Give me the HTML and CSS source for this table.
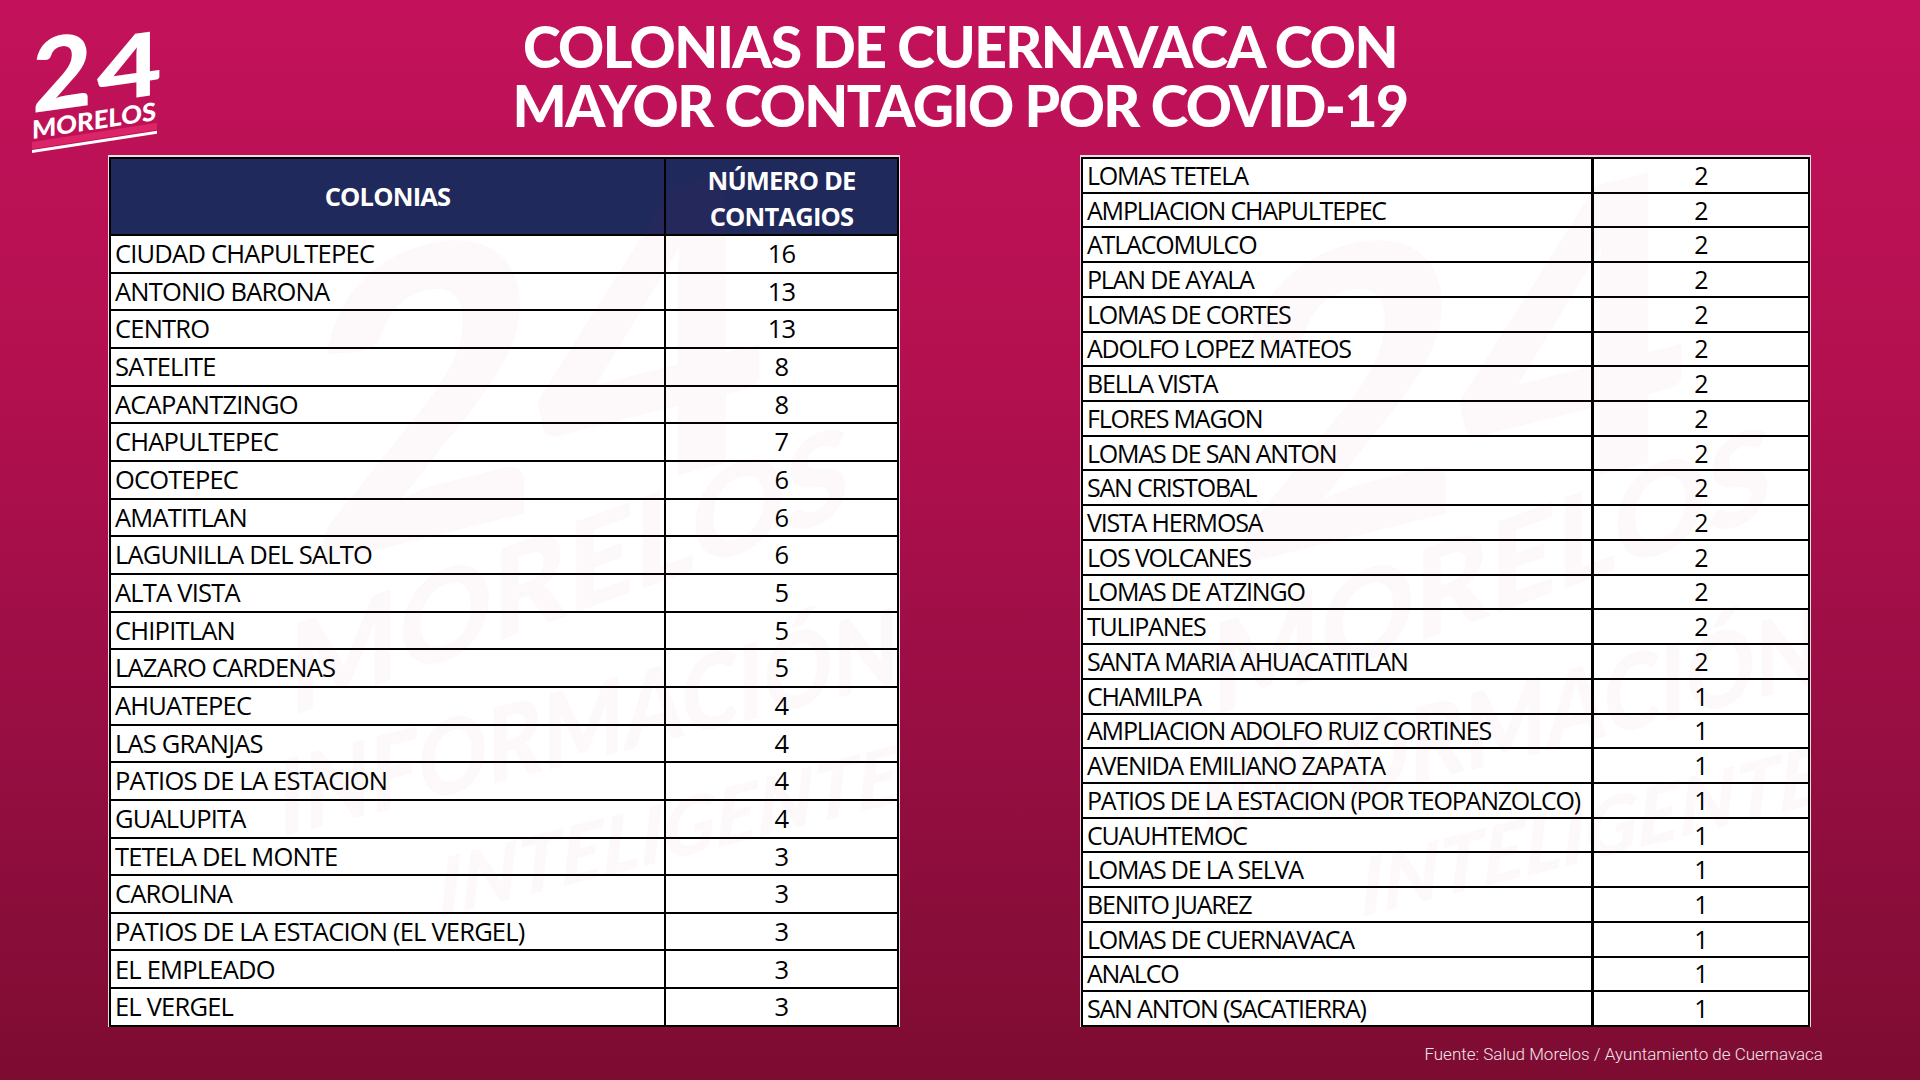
FILE: index.html
```html
<!DOCTYPE html>
<html lang="es">
<head>
<meta charset="utf-8">
<title>Colonias de Cuernavaca con mayor contagio por COVID-19</title>
<link rel="stylesheet" href="styles.css">
</head>
<body>
<div class="page">
  <header class="top">
    <div class="logo-cell">
      <svg class="logo" width="140" height="130" viewBox="0 0 140 130" aria-label="24 Morelos">
        <g transform="translate(3,84) skewY(-8)">
          <text class="logo-num" x="0" y="0" textLength="60" lengthAdjust="spacingAndGlyphs">2</text>
        </g>
        <g transform="translate(68,74) skewY(-8)">
          <text class="logo-num small" x="0" y="0" textLength="65" lengthAdjust="spacingAndGlyphs">4</text>
        </g>
        <g transform="translate(3,110) skewY(-8.7)">
          <text class="logo-word" x="0" y="0" textLength="124" lengthAdjust="spacingAndGlyphs">MORELOS</text>
          <rect x="0" y="3" width="125" height="7" fill="#dc2468"/>
          <rect x="0" y="11" width="125" height="3" fill="#ffffff"/>
        </g>
      </svg>
    </div>
    <h1 class="title"><span class="title-line">COLONIAS DE CUERNAVACA CON</span><span class="title-line">MAYOR CONTAGIO POR COVID-19</span></h1>
    <div class="spacer"></div>
  </header>

  <main class="tables">
    <div class="tbl-wrap tbl-left">
      <table class="tbl">
        <colgroup><col class="c-name-l"><col class="c-num-l"></colgroup>
        <thead>
          <tr class="head-row"><th>COLONIAS</th><th class="two">NÚMERO DE<br>CONTAGIOS</th></tr>
        </thead>
        <tbody>
          <tr><td>CIUDAD CHAPULTEPEC</td><td class="num">16</td></tr>
          <tr><td>ANTONIO BARONA</td><td class="num">13</td></tr>
          <tr><td>CENTRO</td><td class="num">13</td></tr>
          <tr><td>SATELITE</td><td class="num">8</td></tr>
          <tr><td>ACAPANTZINGO</td><td class="num">8</td></tr>
          <tr><td>CHAPULTEPEC</td><td class="num">7</td></tr>
          <tr><td>OCOTEPEC</td><td class="num">6</td></tr>
          <tr><td>AMATITLAN</td><td class="num">6</td></tr>
          <tr><td>LAGUNILLA DEL SALTO</td><td class="num">6</td></tr>
          <tr><td>ALTA VISTA</td><td class="num">5</td></tr>
          <tr><td>CHIPITLAN</td><td class="num">5</td></tr>
          <tr><td>LAZARO CARDENAS</td><td class="num">5</td></tr>
          <tr><td>AHUATEPEC</td><td class="num">4</td></tr>
          <tr><td>LAS GRANJAS</td><td class="num">4</td></tr>
          <tr><td>PATIOS DE LA ESTACION</td><td class="num">4</td></tr>
          <tr><td>GUALUPITA</td><td class="num">4</td></tr>
          <tr><td>TETELA DEL MONTE</td><td class="num">3</td></tr>
          <tr><td>CAROLINA</td><td class="num">3</td></tr>
          <tr><td>PATIOS DE LA ESTACION (EL VERGEL)</td><td class="num">3</td></tr>
          <tr><td>EL EMPLEADO</td><td class="num">3</td></tr>
          <tr><td>EL VERGEL</td><td class="num">3</td></tr>
        </tbody>
      </table>
      <svg class="wm wm-left" width="700" height="720" viewBox="0 0 700 720" aria-hidden="true">
        <g transform="translate(90,330) skewY(-14)">
          <text class="wm-num" x="0" y="0" textLength="460">24</text>
        </g>
        <g transform="translate(70,480) skewY(-20)">
          <text class="wm-word" x="0" y="0" textLength="560" lengthAdjust="spacingAndGlyphs">MORELOS</text>
        </g>
        <g transform="translate(60,600) skewY(-14)">
          <text class="wm-word2" x="0" y="0" textLength="620" lengthAdjust="spacingAndGlyphs">INFORMACIÓN</text>
        </g>
        <g transform="translate(220,680) skewY(-14)">
          <text class="wm-it" x="0" y="0" textLength="460" lengthAdjust="spacingAndGlyphs">INTELIGENTE</text>
        </g>
      </svg>
    </div>

    <div class="tbl-wrap tbl-right">
      <table class="tbl tbl-r">
        <colgroup><col class="c-name-r"><col class="c-num-r"></colgroup>
        <tbody>
          <tr><td>LOMAS TETELA</td><td class="num">2</td></tr>
          <tr><td>AMPLIACION CHAPULTEPEC</td><td class="num">2</td></tr>
          <tr><td>ATLACOMULCO</td><td class="num">2</td></tr>
          <tr><td>PLAN DE AYALA</td><td class="num">2</td></tr>
          <tr><td>LOMAS DE CORTES</td><td class="num">2</td></tr>
          <tr><td>ADOLFO LOPEZ MATEOS</td><td class="num">2</td></tr>
          <tr><td>BELLA VISTA</td><td class="num">2</td></tr>
          <tr><td>FLORES MAGON</td><td class="num">2</td></tr>
          <tr><td>LOMAS DE SAN ANTON</td><td class="num">2</td></tr>
          <tr><td>SAN CRISTOBAL</td><td class="num">2</td></tr>
          <tr><td>VISTA HERMOSA</td><td class="num">2</td></tr>
          <tr><td>LOS VOLCANES</td><td class="num">2</td></tr>
          <tr><td>LOMAS DE ATZINGO</td><td class="num">2</td></tr>
          <tr><td>TULIPANES</td><td class="num">2</td></tr>
          <tr><td>SANTA MARIA AHUACATITLAN</td><td class="num">2</td></tr>
          <tr><td>CHAMILPA</td><td class="num">1</td></tr>
          <tr><td>AMPLIACION ADOLFO RUIZ CORTINES</td><td class="num">1</td></tr>
          <tr><td>AVENIDA EMILIANO ZAPATA</td><td class="num">1</td></tr>
          <tr><td>PATIOS DE LA ESTACION (POR TEOPANZOLCO)</td><td class="num">1</td></tr>
          <tr><td>CUAUHTEMOC</td><td class="num">1</td></tr>
          <tr><td>LOMAS DE LA SELVA</td><td class="num">1</td></tr>
          <tr><td>BENITO JUAREZ</td><td class="num">1</td></tr>
          <tr><td>LOMAS DE CUERNAVACA</td><td class="num">1</td></tr>
          <tr><td>ANALCO</td><td class="num">1</td></tr>
          <tr><td>SAN ANTON (SACATIERRA)</td><td class="num">1</td></tr>
        </tbody>
      </table>
      <svg class="wm wm-right" width="700" height="720" viewBox="0 0 700 720" aria-hidden="true">
        <g transform="translate(90,330) skewY(-14)">
          <text class="wm-num" x="0" y="0" textLength="460">24</text>
        </g>
        <g transform="translate(70,480) skewY(-20)">
          <text class="wm-word" x="0" y="0" textLength="560" lengthAdjust="spacingAndGlyphs">MORELOS</text>
        </g>
        <g transform="translate(60,600) skewY(-14)">
          <text class="wm-word2" x="0" y="0" textLength="620" lengthAdjust="spacingAndGlyphs">INFORMACIÓN</text>
        </g>
        <g transform="translate(220,680) skewY(-14)">
          <text class="wm-it" x="0" y="0" textLength="460" lengthAdjust="spacingAndGlyphs">INTELIGENTE</text>
        </g>
      </svg>
    </div>
  </main>

  <footer class="source">Fuente: Salud Morelos / Ayuntamiento de Cuernavaca</footer>
</div>
</body>
</html>
```

FILE: styles.css
```css
* { box-sizing: border-box; }

html, body {
  margin: 0;
  padding: 0;
}

body {
  width: 1920px;
  height: 1080px;
  overflow: hidden;
  background: linear-gradient(180deg, #c3125b 0%, #b3104f 35%, #9a0e44 65%, #7d0c31 100%);
  font-family: "Open Sans", "Liberation Sans", sans-serif;
}

.page {
  width: 1920px;
  height: 1080px;
  display: flex;
  flex-direction: column;
}

/* ---------- header ---------- */
.top {
  display: grid;
  grid-template-columns: 1fr auto 1fr;
  height: 157px;
}

.logo-cell {
  padding: 29px 0 0 29px;
}

.logo {
  display: block;
  overflow: visible;
}

.logo-num {
  font-family: Lato, "Open Sans", sans-serif;
  font-weight: 900;
  font-size: 101px;
  fill: #ffffff;
}

.logo-num.small {
  font-size: 88px;
}

.logo-word {
  font-family: Lato, "Open Sans", sans-serif;
  font-weight: 900;
  font-size: 25px;
  fill: #ffffff;
}

.title {
  margin: 0;
  padding-top: 17px;
  font-family: Lato, "Open Sans", sans-serif;
  font-weight: 900;
  font-size: 57px;
  color: #ffffff;
  text-align: center;
  letter-spacing: -1.6px;
}

.title-line {
  display: block;
  height: 59px;
  line-height: 59px;
}

/* ---------- tables ---------- */
.tables {
  display: flex;
  align-items: flex-start;
  gap: 182px;
  padding-left: 109px;
  height: 868px;
}

.tbl-wrap {
  position: relative;
}

.tbl {
  table-layout: fixed;
  border-collapse: collapse;
  background: #ffffff;
  color: #000000;
  font-family: "Open Sans", "Liberation Sans", sans-serif;
  font-size: 25.5px;
  letter-spacing: -0.8px;
  box-shadow: 0 -1px 0 1px rgba(255, 255, 255, 0.85);
}

.tbl-left .tbl { width: 788px; }
.tbl-right .tbl { width: 727px; }

.c-name-l { width: 555px; }
.c-num-l { width: 233px; }
.c-name-r { width: 510px; }
.c-num-r { width: 217px; }

.tbl th,
.tbl td {
  border: 2px solid #000000;
  padding: 0 0 0 4px;
  line-height: 1;
  white-space: nowrap;
  overflow: hidden;
  vertical-align: middle;
  font-weight: 400;
}

.tbl th {
  background: #20295b;
  color: #ffffff;
  font-weight: 700;
  text-align: center;
  padding: 0;
}

.tbl th.two {
  line-height: 36px;
  padding-top: 2px;
}

.head-row { height: 77px; }

.tbl-left tbody tr { height: 37.67px; }
.tbl-right tbody tr { height: 34.72px; }

.tbl-r {
  font-size: 25px;
  letter-spacing: -1.2px;
}

.tbl-r td.num { border-left-width: 3px; }

.tbl td.num {
  text-align: center;
  padding: 0;
}

/* faint watermark laid over the white tables */
.wm {
  position: absolute;
  pointer-events: none;
  overflow: visible;
}

.wm-left { left: 110px; top: 80px; }
.wm-right { left: 60px; top: 80px; }

.wm text {
  fill: rgba(200, 20, 80, 0.03);
  font-family: Lato, "Open Sans", sans-serif;
  font-weight: 900;
}

.wm-num { font-size: 400px; }
.wm-word { font-size: 125px; }
.wm-word2 { font-size: 105px; }
.wm-it { font-size: 80px; font-style: italic; font-weight: 400; }

/* ---------- footer ---------- */
.source {
  margin-top: 18px;
  padding-right: 97px;
  text-align: right;
  font-family: Roboto, "Liberation Sans", sans-serif;
  font-weight: 300;
  font-size: 17px;
  line-height: 22px;
  color: #f4e4ea;
}
```
